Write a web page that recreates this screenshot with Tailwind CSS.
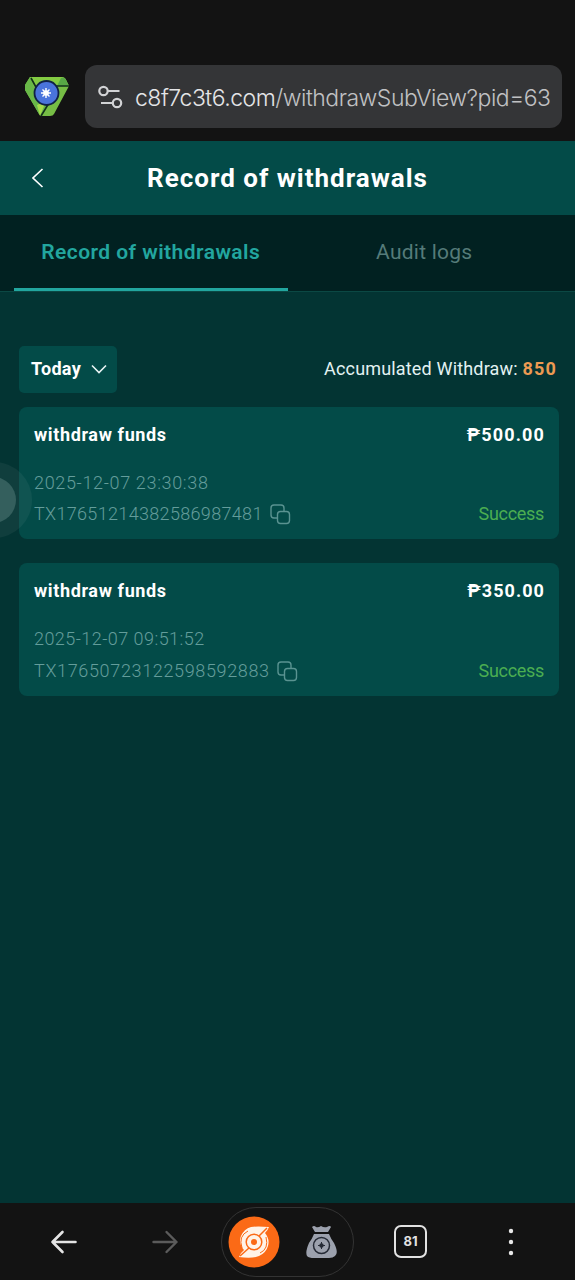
<!DOCTYPE html>
<html lang="en">
<head>
    <meta charset="UTF-8">
    <meta name="viewport" content="width=device-width, initial-scale=1.0">
    <title>Record of withdrawals</title>
    <script src="https://cdn.jsdelivr.net/npm/@tailwindcss/browser@4"></script>
</head>
<body class="bg-[#033433] font-['Roboto',sans-serif] overflow-hidden">
<div class="relative w-[575px] h-[1280px] flex flex-col overflow-hidden">

    <!-- Browser bar -->
    <div class="h-[141px] shrink-0 bg-[#131313] pt-[65px] pl-[25px] pr-[13px] flex items-start">
        <svg class="w-[45px] h-[42px] mt-[11px] shrink-0" viewBox="0 0 45 42">
            <path d="M5 1H36Q40 1 41 4L44 10L29 38Q28 40 25 40H17Q15 40 14 38L0 14V9Z" fill="#76bd45"/>
            <path d="M6 1H36Q40 1 41 4L44 10H22L12 14Z" fill="#83cb42"/>
            <path d="M36 2Q40 1 41 4L44 10H32Z" fill="#58a846"/>
            <path d="M5 1L0 9V14L14 38L16 40L24 26L12 20Z" fill="#69b848"/>
            <path d="M12 29L21 25L15 40Z" fill="#a5db4c"/>
            <path d="M6 2L12 13M22 10H44M24 27L16 40" stroke="#12301b" stroke-width="1.6" fill="none"/>
            <circle cx="21.500" cy="17" r="12" fill="#4a74dc" stroke="#102146" stroke-width="1.8"/>
            <path d="M21 12V22M16 17H26M17.500 13.500L24.500 20.500M24.500 13.500L17.500 20.500" stroke="#fff" stroke-width="1.4"/>
            <circle cx="21" cy="17" r="2.800" fill="#fff"/>
        </svg>
        <div class="ml-[15px] w-[477px] h-[63px] rounded-[12px] bg-[#343537] flex items-center pl-[13px] pr-[12px]">
            <svg class="w-[25px] h-[24px] shrink-0" viewBox="0 0 25 24" fill="none" stroke="#d2d3d5" stroke-width="2.2">
                <circle cx="5.500" cy="6" r="4.200"/>
                <path d="M10 6H21.500M3 18H14"/>
                <circle cx="19" cy="18" r="4.200"/>
            </svg>
            <div class="ml-[12px] pt-[2px] flex-1 overflow-hidden whitespace-nowrap font-['Inter',sans-serif] font-light text-[23px] leading-8 tracking-[-0.5px] text-[#c0c1c3]"><span class="text-[#e4e5e7]">c8f7c3t6.com</span>/withdrawSubView?pid=63</div>
        </div>
    </div>

    <!-- Page header -->
    <div class="h-[74px] shrink-0 bg-[#034b48] grid grid-cols-[75px_1fr_75px] items-center">
        <svg class="w-[12px] h-[20px] ml-[32px]" viewBox="0 0 12 20" fill="none" stroke="#fff" stroke-width="1.6"><path d="M10.500 1L1 10L10.500 19"/></svg>
        <h1 class="text-center text-[26px] font-bold text-white tracking-[1px] whitespace-nowrap">Record of withdrawals</h1>
    </div>

    <!-- Tabs -->
    <div class="h-[77px] shrink-0 bg-[#012121] border-b border-[#0b4844] px-[14px] grid grid-cols-2 text-center text-[21px] leading-[74px]">
        <div class="h-[76px] border-b-[3px] border-[#22a69f] text-[#22a69f] font-semibold tracking-[0.45px] whitespace-nowrap">Record of withdrawals</div>
        <div class="text-[#557b79] tracking-[0.25px]">Audit logs</div>
    </div>

    <!-- Records -->
    <div class="flex-1 pt-[54px] pl-[19px] pr-[16px]">
        <div class="flex items-center justify-between pr-[3px]">
            <button class="w-[98px] h-[47px] rounded-[5px] bg-[#034b48] flex items-center justify-between pl-[12px] pr-[10px] pb-[2px] text-[18px] font-bold text-white">
                <span class="tracking-[0.3px]">Today</span>
                <svg class="w-[16px] h-[10px]" viewBox="0 0 16 10" fill="none" stroke="#e8f4f4" stroke-width="1.6"><path d="M1 1.500L8 8.500L15 1.500"/></svg>
            </button>
            <div class="pb-[2px] text-[18px] text-[#e2f2f2] whitespace-nowrap tracking-[0.17px]">Accumulated Withdraw: <span class="font-bold text-[#ec9a52] tracking-[1.2px] mr-[-1px]">850</span></div>
        </div>

        <div class="mt-[14px] flex flex-col gap-[24px]">
            <div class="h-[132px] rounded-[8px] bg-[#034b48] px-[15px] pt-[14px]">
                <div class="flex justify-between text-[18px] leading-7 font-bold text-white">
                    <span class="tracking-[0.63px]">withdraw funds</span><span class="tracking-[1.15px] mr-[-1px]">₱500.00</span>
                </div>
                <div class="mt-[20px] text-[18px] leading-7 font-light tracking-[0.66px] text-[#649d9b]">2025-12-07 23:30:38</div>
                <div class="mt-[3px] flex items-center text-[18px] leading-7">
                    <span class="font-light tracking-[0.33px] text-[#649d9b]">TX17651214382586987481</span>
                    <svg class="ml-[7px] mt-[1px] w-[21px] h-[21px]" viewBox="0 0 21 21" fill="none" stroke="#5a9391" stroke-width="1.4"><path d="M14 7V4Q14 1 11 1H4Q1 1 1 4V11Q1 14 4 14H7"/><rect x="7.500" y="7.500" width="12" height="12" rx="3"/></svg>
                    <span class="ml-auto text-[#4bae51] tracking-[-0.3px]">Success</span>
                </div>
            </div>
            <div class="h-[133px] rounded-[8px] bg-[#034b48] px-[15px] pt-[14px]">
                <div class="flex justify-between text-[18px] leading-7 font-bold text-white">
                    <span class="tracking-[0.63px]">withdraw funds</span><span class="tracking-[1.05px] mr-[-1px]">₱350.00</span>
                </div>
                <div class="mt-[20px] text-[18px] leading-7 font-light tracking-[0.45px] text-[#649d9b]">2025-12-07 09:51:52</div>
                <div class="mt-[4px] flex items-center text-[18px] leading-7">
                    <span class="font-light tracking-[0.65px] text-[#649d9b]">TX17650723122598592883</span>
                    <svg class="ml-[7px] w-[21px] h-[21px]" viewBox="0 0 21 21" fill="none" stroke="#5a9391" stroke-width="1.4"><path d="M14 7V4Q14 1 11 1H4Q1 1 1 4V11Q1 14 4 14H7"/><rect x="7.500" y="7.500" width="12" height="12" rx="3"/></svg>
                    <span class="ml-auto text-[#4bae51] tracking-[-0.3px]">Success</span>
                </div>
            </div>
        </div>
    </div>

    <!-- Bottom navigation -->
    <div class="h-[77px] shrink-0 bg-[#131313] flex items-center pl-[50px]">
        <svg class="w-[28px] h-[24px]" viewBox="0 0 28 24" fill="none" stroke="#e4e4e4" stroke-width="2.6" stroke-linecap="round" stroke-linejoin="round"><path d="M25.500 12H2.500M12.500 2L2.500 12L12.500 22"/></svg>
        <svg class="ml-[73px] w-[28px] h-[24px]" viewBox="0 0 28 24" fill="none" stroke="#5b5b5b" stroke-width="2.4" stroke-linecap="round" stroke-linejoin="round"><path d="M2.500 12H25.500M15.500 2L25.500 12L15.500 22"/></svg>
        <div class="ml-[42px] w-[133px] h-[70px] rounded-full border border-[#333] flex items-center pl-[6px]">
            <svg class="w-[52px] h-[52px]" viewBox="0 0 52 52">
                <circle cx="26" cy="26" r="25.500" fill="#fb6a16"/>
                <path d="M41 11Q40 14 37 17Q42 23 40 30Q38 37 31 40Q24 43 11 41Q12 37 16 34Q10 27 13 20Q16 13 23 11Q29 10 41 11Z" fill="#fff3e8"/>
                <path d="M39 12L31 20M12 40L21 32" stroke="#fb6a16" stroke-width="1.5"/>
                <path d="M14 32Q10 20 20 15M38 21Q41 33 32 37" fill="none" stroke="#fb6a16" stroke-width="1"/>
                <circle cx="26" cy="26" r="7.800" fill="#fff3e8" stroke="#fb6a16" stroke-width="1.5"/>
                <circle cx="26" cy="26" r="3" fill="#fb6a16"/>
            </svg>
            <svg class="ml-[26px] w-[31px] h-[33px]" viewBox="0 0 31 33">
                <path d="M6 2Q8 0 10 2Q12 3 15 1Q18 3 21 2Q24 0 25 2L22 7H9Z" fill="#9ca1ad"/>
                <path d="M8 9H23Q25 14 28 18Q33 28 29 31Q27 33 23 33H8Q3 33 1 31Q-1 27 3 18Q6 14 8 9Z" fill="#9ca1ad"/>
                <circle cx="15.500" cy="20.500" r="8" fill="none" stroke="#252a35" stroke-width="1.5"/>
                <circle cx="15.500" cy="20.500" r="2.200" fill="#252a35"/>
                <path d="M15.500 17V24M12 20.500H19" stroke="#252a35"/>
            </svg>
        </div>
        <div class="ml-[40px] w-[33px] h-[33px] rounded-[7px] border-2 border-[#e2e2e2] flex items-center justify-center pt-px font-['Inter',sans-serif] text-[13px] font-bold text-[#e2e2e2]">81</div>
        <svg class="ml-[81px] w-[6px] h-[28px]" viewBox="0 0 6 28" fill="#e8e8e8"><circle cx="3" cy="3" r="2.200"/><circle cx="3" cy="14" r="2.200"/><circle cx="3" cy="25" r="2.200"/></svg>
    </div>

    <!-- Floating assist handle on the screen edge -->
    <div class="absolute left-[-44px] top-[462px] w-[76px] h-[76px] rounded-full bg-white/5 flex items-center justify-center">
        <div class="w-[46px] h-[46px] rounded-full bg-[#345f5d] translate-x-[-1px]"></div>
    </div>
</div>
</body>
</html>
